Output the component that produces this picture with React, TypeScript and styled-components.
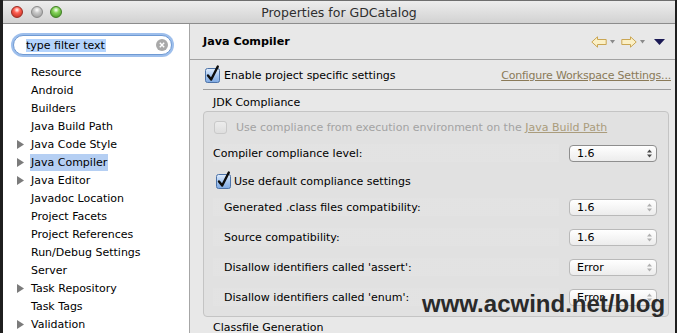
import React from "react";
import styled, { createGlobalStyle } from "styled-components";

const Global = createGlobalStyle`
  html, body { margin: 0; padding: 0; background: #1f1f1f; }
  body { font-family: "DejaVu Sans", "Liberation Sans", sans-serif; font-size: 11px; color: #000; }
  #root { width: 677px; height: 333px; overflow: hidden; }
`;

const Desktop = styled.div`
  position: relative;
  width: 677px;
  height: 333px;
  display: flex;
  overflow: hidden;
  background: #1f1f1f;
`;

const Window = styled.div`
  margin-left: 3px;
  width: 672px;
  height: 333px;
  display: flex;
  flex-direction: column;
  background: #e8e8e8;
`;

const TitleBar = styled.div`
  flex: none;
  height: 22px;
  display: grid;
  grid-template-columns: 1fr auto 1fr;
  align-items: center;
  background: linear-gradient(#ededed, #d2d2d2);
  border-top: 1px solid #6e6e6e;
  border-bottom: 1px solid #8c8c8c;
`;

const Lights = styled.div`
  display: flex;
  gap: 7.5px;
  padding-left: 8px;
`;

const Light = styled.span<{ $c1: string; $c2: string; $b: string }>`
  width: 12px;
  height: 12px;
  border-radius: 50%;
  box-sizing: border-box;
  border: 1px solid ${(p) => p.$b};
  background: radial-gradient(circle at 50% 30%, #ffffff 0%, ${(p) => p.$c1} 35%, ${(p) => p.$c2} 100%);
`;

const Title = styled.div`
  font-size: 12.5px;
  color: #2e2e2e;
  white-space: nowrap;
`;

const Body = styled.div`
  flex: 1;
  min-height: 0;
  display: flex;
`;

const Sidebar = styled.div`
  flex: none;
  width: 186px;
  background: #fff;
  border-right: 1px solid #a6a6a6;
  padding-top: 11px;
  display: flex;
  flex-direction: column;
`;

const Search = styled.div`
  margin-left: 10px;
  width: 159px;
  height: 20px;
  box-sizing: border-box;
  border-radius: 10px;
  border: 1px solid #6f9ad3;
  box-shadow: 0 0 0 2px rgba(125, 170, 230, 0.75);
  display: flex;
  align-items: center;
  padding: 0 3px 0 12px;
  background: #fff;
`;

const Selected = styled.span`
  background: #b4d4fd;
  line-height: 13px;
  font-size: 11px;
  padding-right: 1px;
`;

const Clear = styled.span`
  margin-left: auto;
  width: 12px;
  height: 12px;
  border-radius: 50%;
  background: #a9a9a9;
  display: flex;
  align-items: center;
  justify-content: center;
`;

const Tree = styled.div`
  margin-top: 8px;
  display: flex;
  flex-direction: column;
`;

const TreeItem = styled.div`
  height: 18px;
  display: flex;
  align-items: center;
`;

const Toggle = styled.span`
  flex: none;
  width: 27px;
  padding-left: 14px;
  box-sizing: border-box;
  display: flex;
  align-items: center;
`;

const ItemLabel = styled.span<{ $sel?: boolean }>`
  line-height: 17px;
  padding: 0 1px;
  background: ${(p) => (p.$sel ? "#b5cff3" : "transparent")};
  white-space: nowrap;
`;

const Main = styled.div`
  flex: 1;
  min-width: 0;
  display: flex;
  flex-direction: column;
`;

const Header = styled.div`
  flex: none;
  height: 35px;
  display: flex;
  align-items: center;
  justify-content: space-between;
  padding: 0 10px 0 13px;
  border-bottom: 1px solid #a2a2a2;
`;

const HeaderTitle = styled.div`
  font-weight: bold;
  font-size: 11.2px;
`;

const Nav = styled.div`
  display: flex;
  align-items: center;
  padding-top: 1px;
`;

const NavIcon = styled.span<{ $ml: number }>`
  display: flex;
  margin-left: ${(p) => p.$ml}px;
`;

const Content = styled.div`
  padding: 7px 4px 0 13px;
  display: flex;
  flex-direction: column;
`;

const EnableRow = styled.div`
  height: 16px;
  display: flex;
  align-items: center;
  padding-left: 2px;
  gap: 4px;
`;

const Link = styled.span<{ $disabled?: boolean }>`
  color: ${(p) => (p.$disabled ? "#aa9c7c" : "#8a7a58")};
  text-decoration: underline;
`;

const RightLink = styled(Link)`
  margin-left: auto;
  letter-spacing: -0.2px;
`;

const Separator = styled.div`
  margin-top: 6px;
  height: 1px;
  background: #9e9e9e;
`;

const SectionTitle = styled.div<{ $mt: number }>`
  margin-top: ${(p) => p.$mt}px;
  height: 14px;
  line-height: 14px;
  padding-left: 10px;
  white-space: nowrap;
`;

const Group = styled.div`
  margin-top: 1px;
  margin-right: 2px;
  border: 1px solid #c4c4c4;
  border-radius: 4px;
  background: #e1e1e1;
  padding: 6px 11px 10px 9px;
  display: flex;
  flex-direction: column;
`;

const Row = styled.div<{ $gap: number; $indent: number; $band?: boolean }>`
  height: 18px;
  margin-top: ${(p) => p.$gap}px;
  padding-left: ${(p) => p.$indent}px;
  display: flex;
  align-items: center;
  white-space: nowrap;
  background: ${(p) =>
    p.$band ? "linear-gradient(90deg, rgba(255,255,255,0.06) 0, rgba(255,255,255,0.06) 346px, transparent 346px)" : "transparent"};
`;

const Muted = styled.span`
  color: #a3a3a3;
`;

const DisabledBox = styled.span`
  width: 13px;
  height: 13px;
  box-sizing: border-box;
  border: 1px solid #c9c9c9;
  border-radius: 3px;
  background: linear-gradient(#ececec, #dedede);
  margin-right: 9px;
`;

const Select = styled.div<{ $enabled?: boolean }>`
  margin-left: auto;
  width: 88px;
  height: 17px;
  box-sizing: border-box;
  border: 1px solid ${(p) => (p.$enabled ? "#8e8e8e" : "#b9b9b9")};
  border-radius: 4px;
  background: linear-gradient(#ffffff, #ececec);
  display: flex;
  align-items: center;
  padding: 0 4px 0 7px;
  font-size: 11px;
`;

const SelectArrows = styled.span`
  margin-left: auto;
  display: flex;
`;

const Watermark = styled.div`
  position: absolute;
  left: 422px;
  top: 292px;
  font-family: "Liberation Sans", Arial, sans-serif;
  font-weight: bold;
  font-size: 24px;
  line-height: 24px;
  color: #2a2a2a;
  white-space: nowrap;
`;

const CheckBox = () => (
  <svg width="15" height="15" viewBox="0 0 15 15" style={{ overflow: "visible", flex: "none" }}>
    <defs>
      <linearGradient id="cbg" x1="0" y1="0" x2="0" y2="1">
        <stop offset="0" stopColor="#e3eefc" />
        <stop offset="0.5" stopColor="#a9c8f0" />
        <stop offset="1" stopColor="#7ea9e2" />
      </linearGradient>
    </defs>
    <rect x="0.5" y="0.5" width="14" height="14" rx="2" fill="url(#cbg)" stroke="#4d73a8" />
    <path d="M3 7.5 L6.2 11.5 L12.8 -1.5" fill="none" stroke="#0d0d0d" strokeWidth="2.4" strokeLinecap="round" strokeLinejoin="round" />
  </svg>
);

const Tri = () => (
  <svg width="7" height="9" viewBox="0 0 7 9">
    <path d="M0 0 L7 4.5 L0 9 Z" fill="#7b7b7b" />
  </svg>
);

const UpDown = ({ c }: { c: string }) => (
  <svg width="5" height="9" viewBox="0 0 5 9">
    <path d="M0 3.5 L2.5 0.5 L5 3.5 Z M0 5.5 L2.5 8.5 L5 5.5 Z" fill={c} />
  </svg>
);

const ArrowLeft = () => (
  <svg width="16" height="12" viewBox="0 0 16 12">
    <path d="M0.8 6 L6.5 0.8 L6.5 3.5 L15.2 3.5 L15.2 8.5 L6.5 8.5 L6.5 11.2 Z" fill="#fbf0c6" stroke="#caa653" strokeWidth="1" strokeLinejoin="round" />
  </svg>
);

const ArrowRight = () => (
  <svg width="16" height="12" viewBox="0 0 16 12">
    <path d="M15.2 6 L9.5 0.8 L9.5 3.5 L0.8 3.5 L0.8 8.5 L9.5 8.5 L9.5 11.2 Z" fill="#fbf0c6" stroke="#caa653" strokeWidth="1" strokeLinejoin="round" />
  </svg>
);

const SmallDown = () => (
  <svg width="5" height="4" viewBox="0 0 5 4">
    <path d="M0 0 L5 0 L2.5 3.5 Z" fill="#8a8a8a" />
  </svg>
);

const BigDown = () => (
  <svg width="11" height="6" viewBox="0 0 11 6">
    <path d="M0 0 L11 0 L5.5 6 Z" fill="#1b1a55" />
  </svg>
);

const items: { label: string; arrow?: boolean; sel?: boolean }[] = [
  { label: "Resource" },
  { label: "Android" },
  { label: "Builders" },
  { label: "Java Build Path" },
  { label: "Java Code Style", arrow: true },
  { label: "Java Compiler", arrow: true, sel: true },
  { label: "Java Editor", arrow: true },
  { label: "Javadoc Location" },
  { label: "Project Facets" },
  { label: "Project References" },
  { label: "Run/Debug Settings" },
  { label: "Server" },
  { label: "Task Repository", arrow: true },
  { label: "Task Tags" },
  { label: "Validation", arrow: true },
];

const compat = [
  { label: "Generated .class files compatibility:", value: "1.6", gap: 8 },
  { label: "Source compatibility:", value: "1.6", gap: 12 },
  { label: "Disallow identifiers called 'assert':", value: "Error", gap: 12 },
  { label: "Disallow identifiers called 'enum':", value: "Error", gap: 12 },
];

export default function App() {
  return (
    <>
      <Global />
      <Desktop>
        <Window>
          <TitleBar>
            <Lights>
              <Light $c1="#ff5f52" $c2="#b5271b" $b="#9b2a20" />
              <Light $c1="#c9c9c9" $c2="#939393" $b="#8a8a8a" />
              <Light $c1="#86d35a" $c2="#3a8d1c" $b="#3f7d22" />
            </Lights>
            <Title>Properties for GDCatalog</Title>
            <span />
          </TitleBar>
          <Body>
            <Sidebar>
              <Search>
                <Selected>type filter text</Selected>
                <Clear>
                  <svg width="6" height="6" viewBox="0 0 6 6">
                    <path d="M0.8 0.8 L5.2 5.2 M5.2 0.8 L0.8 5.2" stroke="#fff" strokeWidth="1.4" />
                  </svg>
                </Clear>
              </Search>
              <Tree>
                {items.map((it) => (
                  <TreeItem key={it.label}>
                    <Toggle>{it.arrow && <Tri />}</Toggle>
                    <ItemLabel $sel={it.sel}>{it.label}</ItemLabel>
                  </TreeItem>
                ))}
              </Tree>
            </Sidebar>
            <Main>
              <Header>
                <HeaderTitle>Java Compiler</HeaderTitle>
                <Nav>
                  <NavIcon $ml={0}><ArrowLeft /></NavIcon>
                  <NavIcon $ml={3}><SmallDown /></NavIcon>
                  <NavIcon $ml={6}><ArrowRight /></NavIcon>
                  <NavIcon $ml={3}><SmallDown /></NavIcon>
                  <NavIcon $ml={9}><BigDown /></NavIcon>
                </Nav>
              </Header>
              <Content>
                <EnableRow>
                  <CheckBox />
                  <span>Enable project specific settings</span>
                  <RightLink>Configure Workspace Settings...</RightLink>
                </EnableRow>
                <Separator />
                <SectionTitle $mt={6}>JDK Compliance</SectionTitle>
                <Group>
                  <Row $gap={0} $indent={1}>
                    <DisabledBox />
                    <Muted>
                      Use compliance from execution environment on the <Link $disabled>Java Build Path</Link>
                    </Muted>
                  </Row>
                  <Row $gap={8} $indent={0} $band>
                    <span>Compiler compliance level:</span>
                    <Select $enabled>
                      1.6
                      <SelectArrows><UpDown c="#4a4a4a" /></SelectArrows>
                    </Select>
                  </Row>
                  <Row $gap={10} $indent={3}>
                    <CheckBox />
                    <span style={{ marginLeft: 3 }}>Use default compliance settings</span>
                  </Row>
                  {compat.map((c) => (
                    <Row key={c.label} $gap={c.gap} $indent={11} $band>
                      <span>{c.label}</span>
                      <Select>
                        {c.value}
                        <SelectArrows><UpDown c="#b0b0b0" /></SelectArrows>
                      </Select>
                    </Row>
                  ))}
                </Group>
                <SectionTitle $mt={4}>Classfile Generation</SectionTitle>
              </Content>
            </Main>
          </Body>
        </Window>
        <Watermark>www.acwind.net/blog</Watermark>
      </Desktop>
    </>
  );
}
